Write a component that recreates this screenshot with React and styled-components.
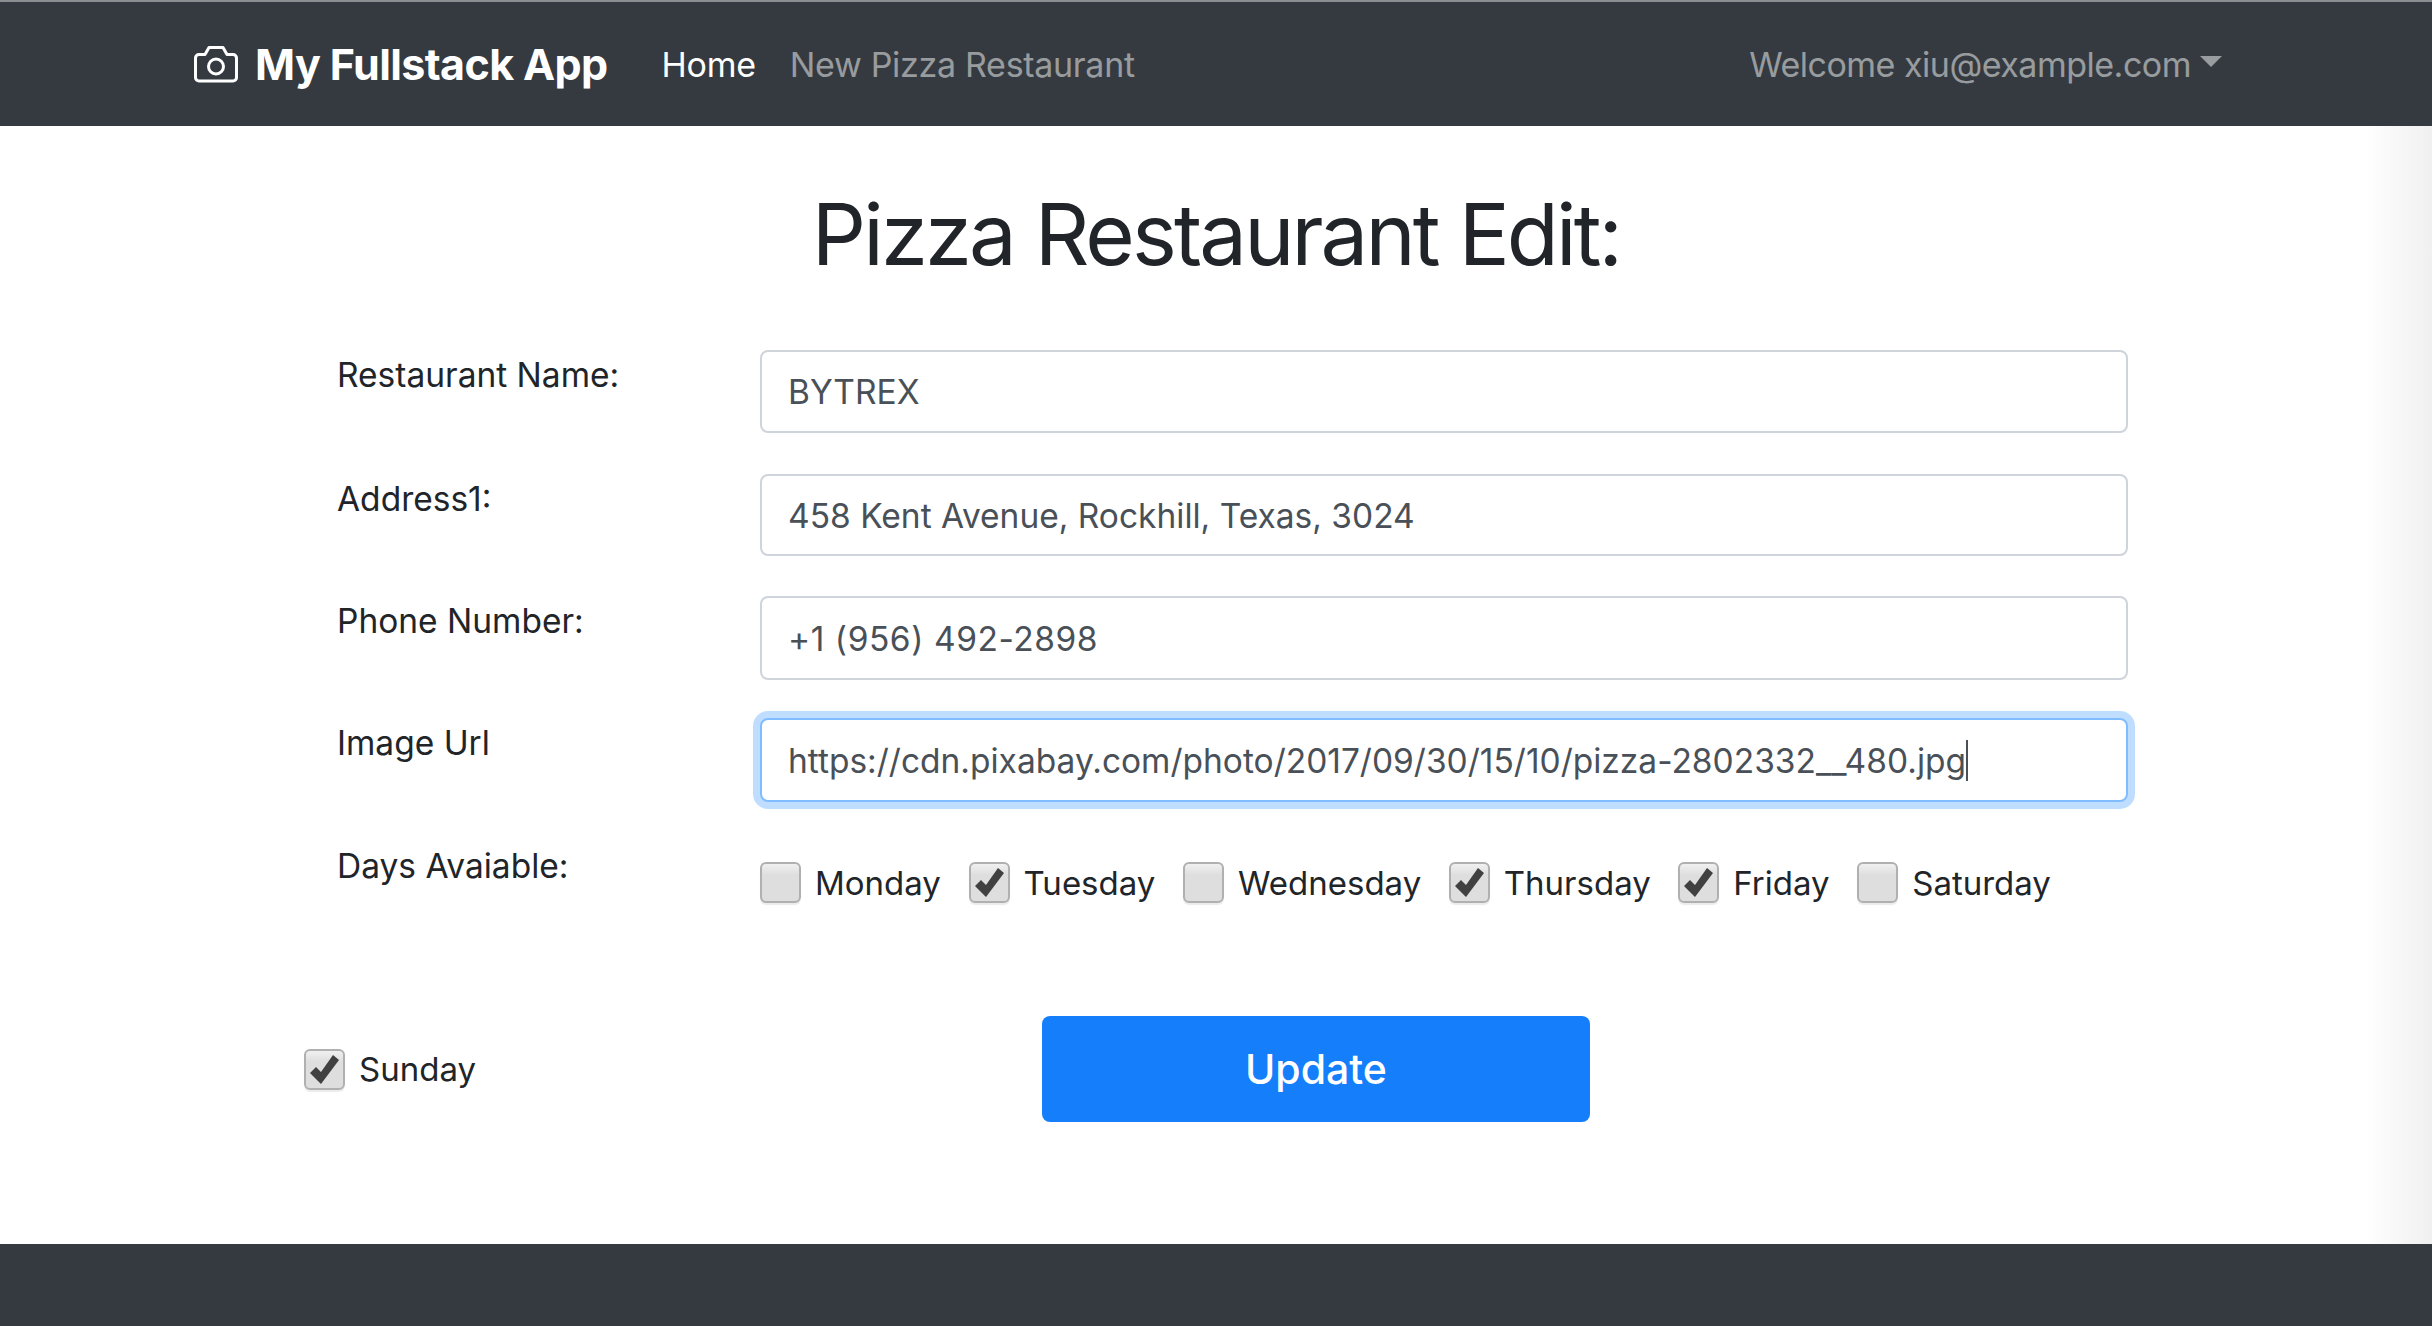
import React from 'react'
import styled, { createGlobalStyle } from 'styled-components'

const GlobalStyle = createGlobalStyle`
  html, body {
    margin: 0;
    padding: 0;
    background: #fff;
    font-family: Inter, "Liberation Sans", sans-serif;
    color: #212529;
  }
  * {
    box-sizing: border-box;
  }
`

const Page = styled.div`
  display: flex;
  flex-direction: column;
  height: 1326px;
  overflow: hidden;
`

const NavBar = styled.nav`
  display: flex;
  align-items: center;
  height: 126px;
  padding: 0 210px 0 194px;
  background: #343a40;
  border-top: 2px solid #8c8f92;
`

const Brand = styled.a`
  display: flex;
  align-items: center;
  gap: 17px;
  margin-right: 54px;
  font-size: 43px;
  font-weight: 700;
  letter-spacing: -0.6px;
  color: #fff;

  svg {
    display: block;
  }
`

const NavLink = styled.a`
  margin-right: 34px;
  font-size: 34px;
  letter-spacing: -0.3px;
  color: ${props => props.active ? '#fff' : 'rgba(255, 255, 255, 0.5)'};
`

const UserMenu = styled.div`
  display: flex;
  align-items: center;
  gap: 9px;
  margin-left: auto;
  font-size: 34px;
  letter-spacing: -0.5px;
  color: rgba(255, 255, 255, 0.5);
`

const DownCaret = styled.span`
  width: 0;
  height: 0;
  margin-bottom: 6px;
  border-top: 11px solid rgba(255, 255, 255, 0.5);
  border-left: 11px solid transparent;
  border-right: 11px solid transparent;
`

const Main = styled.main`
  flex: 1;
  background: linear-gradient(to right, #fff 2365px, #f0f0f0 2432px);
`

const Title = styled.h1`
  margin: 0;
  padding-top: 58px;
  height: 224px;
  font-size: 85px;
  font-weight: 400;
  line-height: 1.2;
  letter-spacing: -2.9px;
  text-align: center;
`

const FormRow = styled.div`
  display: grid;
  grid-template-columns: 423px 1368px;
  align-items: start;
  margin-left: 337px;
  margin-bottom: ${props => props.gap}px;
`

const Label = styled.label`
  font-size: 33.5px;
  line-height: 51px;
`

const Field = styled.div`
  display: flex;
  align-items: center;
  height: ${props => props.height}px;
  padding: 1px 26px 0;
  background: #fff;
  border: 2px solid ${props => props.focused ? '#80bdff' : '#ced4da'};
  border-radius: 8px;
  box-shadow: ${props => props.focused ? '0 0 0 7px rgba(0, 123, 255, 0.25)' : 'none'};
  font-size: 33.5px;
  letter-spacing: ${props => props.spacing || 0}px;
  color: #495057;
  white-space: nowrap;
`

const TextCaret = styled.span`
  width: 2px;
  height: 41px;
  background: #495057;
`

const DaysList = styled.div`
  display: flex;
  align-items: center;
  padding-top: 21px;
`

const DayOption = styled.div`
  display: flex;
  align-items: center;
  gap: 14px;
  margin-right: 27.6px;
  font-size: 33px;
`

const CheckBox = styled.span`
  display: flex;
  align-items: center;
  justify-content: center;
  width: 41px;
  height: 41px;
  background: linear-gradient(#f0f0f0, #dedede 30%, #dedede);
  border: 2px solid #b0b0b0;
  border-radius: 6px;
  box-shadow: 0 2px 1px rgba(0, 0, 0, 0.08);
`

const SubmitRow = styled.div`
  display: flex;
  align-items: center;
  padding-left: 304px;
  padding-top: 113px;
`

const UpdateButton = styled.button`
  width: 548px;
  height: 106px;
  margin-left: 538.4px;
  background: #157efb;
  border: none;
  border-radius: 8px;
  font-family: inherit;
  font-size: 41px;
  font-weight: 500;
  color: #fff;
`

const Footer = styled.footer`
  height: 82px;
  background: #343a40;
`

const CameraIcon = () => (
  <svg width="44" height="37" viewBox="0 0 44 37" fill="none" stroke="#fff" strokeWidth="3" strokeLinejoin="round">
    <path d="M5 8.5h6l4-7h14l4 7h6a3.5 3.5 0 0 1 3.5 3.5v19.5a3.5 3.5 0 0 1-3.5 3.5H5a3.5 3.5 0 0 1-3.5-3.5V12A3.5 3.5 0 0 1 5 8.5z" />
    <circle cx="22" cy="20.5" r="7.5" />
  </svg>
)

const CheckMark = () => (
  <svg width="29" height="29" viewBox="0 0 29 29">
    <path d="M0 18l6-6 5 5L23 0l6 5-18 24z" fill="#404040" />
  </svg>
)

const Day = ({ name, checked }) => (
  <DayOption>
    <CheckBox>{checked && <CheckMark />}</CheckBox>
    {name}
  </DayOption>
)

export default function App() {
  const days = [
    ['Monday', false],
    ['Tuesday', true],
    ['Wednesday', false],
    ['Thursday', true],
    ['Friday', true],
    ['Saturday', false]
  ]

  return (
    <Page>
      <GlobalStyle />
      <NavBar>
        <Brand><CameraIcon />My Fullstack App</Brand>
        <NavLink active>Home</NavLink>
        <NavLink>New Pizza Restaurant</NavLink>
        <UserMenu>Welcome xiu@example.com<DownCaret /></UserMenu>
      </NavBar>
      <Main>
        <Title>Pizza Restaurant Edit:</Title>
        <FormRow gap={41}>
          <Label>Restaurant Name:</Label>
          <Field height={83}>BYTREX</Field>
        </FormRow>
        <FormRow gap={40}>
          <Label>Address1:</Label>
          <Field height={82}>458 Kent Avenue, Rockhill, Texas, 3024</Field>
        </FormRow>
        <FormRow gap={38}>
          <Label>Phone Number:</Label>
          <Field height={84} spacing={0.55}>+1 (956) 492-2898</Field>
        </FormRow>
        <FormRow gap={39}>
          <Label>Image Url</Label>
          <Field focused height={84}>https://cdn.pixabay.com/photo/2017/09/30/15/10/pizza-2802332__480.jpg<TextCaret /></Field>
        </FormRow>
        <FormRow gap={0}>
          <Label>Days Avaiable:</Label>
          <DaysList>
            {days.map(([name, checked]) => <Day name={name} checked={checked} key={name} />)}
          </DaysList>
        </FormRow>
        <SubmitRow>
          <Day name="Sunday" checked />
          <UpdateButton>Update</UpdateButton>
        </SubmitRow>
      </Main>
      <Footer />
    </Page>
  )
}
